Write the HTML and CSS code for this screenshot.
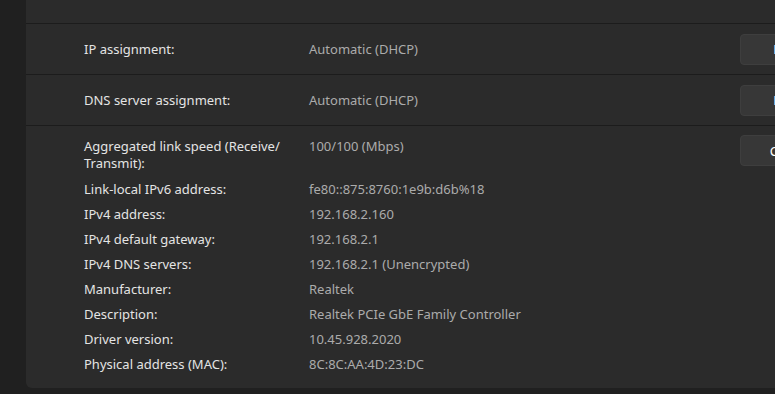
FILE: index.html
```html
<!DOCTYPE html>
<html>
<head>
<meta charset="utf-8">
<link rel="stylesheet" href="styles.css">
</head>
<body>
<div class="card">
  <div class="top"></div>
  <div class="row">
    <div class="label">IP assignment:</div>
    <div class="value">Automatic (DHCP)</div>
    <button class="btn">Edit</button>
  </div>
  <div class="row">
    <div class="label">DNS server assignment:</div>
    <div class="value">Automatic (DHCP)</div>
    <button class="btn">Edit</button>
  </div>
  <div class="details">
    <div class="grid">
      <div class="label first">Aggregated link speed (Receive/ Transmit):</div>
      <div class="value first">100/100 (Mbps)</div>
      <div class="label">Link-local IPv6 address:</div>
      <div class="value">fe80::875:8760:1e9b:d6b%18</div>
      <div class="label">IPv4 address:</div>
      <div class="value">192.168.2.160</div>
      <div class="label">IPv4 default gateway:</div>
      <div class="value">192.168.2.1</div>
      <div class="label">IPv4 DNS servers:</div>
      <div class="value">192.168.2.1 (Unencrypted)</div>
      <div class="label">Manufacturer:</div>
      <div class="value">Realtek</div>
      <div class="label">Description:</div>
      <div class="value">Realtek PCIe GbE Family Controller</div>
      <div class="label">Driver version:</div>
      <div class="value">10.45.928.2020</div>
      <div class="label">Physical address (MAC):</div>
      <div class="value">8C:8C:AA:4D:23:DC</div>
    </div>
    <button class="btn btn-copy">Copy</button>
  </div>
</div>
</body>
</html>
```
FILE: styles.css
```css
html, body {
  margin: 0;
  padding: 0;
  background: #202020;
  overflow: hidden;
  width: 775px;
  height: 394px;
}
body {
  font-family: "Noto Sans", "Open Sans", sans-serif;
  font-size: 13px;
  line-height: 17px;
  color: #e4e4e4;
}
.card {
  margin-left: 26px;
  width: 828px;
  background: #2b2b2b;
  border-radius: 0 0 6px 6px;
}
.top {
  height: 23px;
  border-bottom: 1px solid #1c1c1c;
}
.row {
  display: flex;
  align-items: center;
  height: 50px;
  padding: 0 24px 0 58px;
  border-bottom: 1px solid #1c1c1c;
}
.label {
  color: #e4e4e4;
}
.row .label {
  width: 225px;
  flex: none;
}
.value {
  color: #ababab;
}
.row .value {
  flex: 1;
}
.btn {
  width: 90px;
  height: 31px;
  flex: none;
  background: #373737;
  border: 1px solid #3e3e3e;
  border-radius: 4px;
  color: #ffffff;
  font-family: inherit;
  font-size: 13px;
  padding: 0;
}
.details {
  display: flex;
  align-items: flex-start;
  padding: 12px 24px 15px 58px;
}
.grid {
  flex: 1;
  display: grid;
  grid-template-columns: 209px 1fr;
  column-gap: 16px;
  row-gap: 8px;
}
.grid .first {
  margin-bottom: 1px;
}
.btn-copy {
  margin-top: -3px;
}
```
